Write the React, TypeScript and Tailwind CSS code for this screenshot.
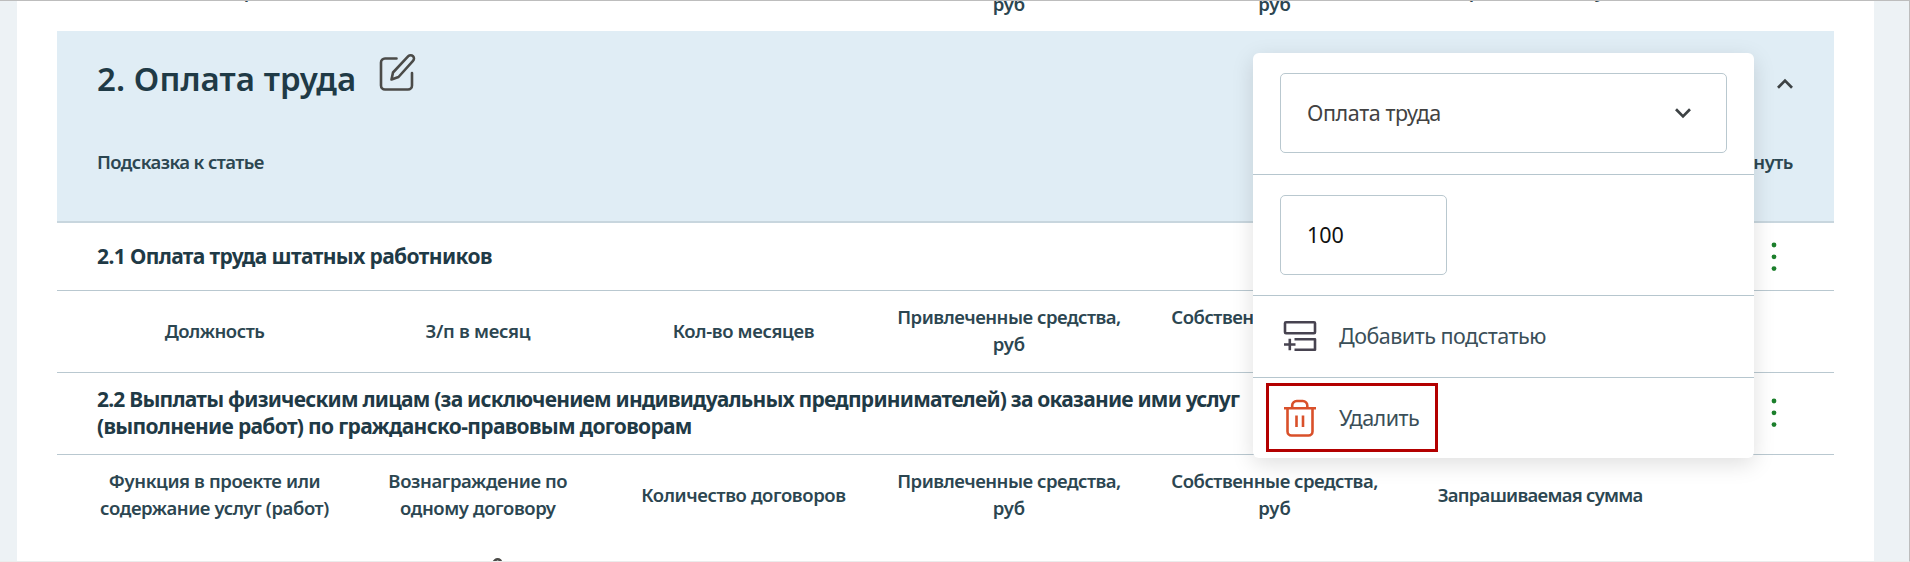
import type { ReactNode } from "react";

function EditIcon() {
  return (
    <svg width="38" height="38" viewBox="0 0 38 38" fill="none" stroke="#4b4b48" strokeWidth="2.6" strokeLinecap="round" strokeLinejoin="round">
      <path d="M17.500 5.500H6a4 4 0 0 0-4 4V32.500a4 4 0 0 0 4 4H29a4 4 0 0 0 4-4V20" />
      <path d="M29.300 3.200a3.300 3.300 0 0 1 4.700 4.700L19.500 24l-7 2.500 1.500-7z" />
    </svg>
  );
}

function DotsIcon() {
  return (
    <svg width="8" height="32" viewBox="0 0 8 32" fill="#1c7f2c">
      <circle cx="4" cy="4" r="2.400" />
      <circle cx="4" cy="15.800" r="2.400" />
      <circle cx="4" cy="27.600" r="2.400" />
    </svg>
  );
}

function Chevron({ up = false }: { up?: boolean }) {
  return (
    <svg width="18" height="12" viewBox="0 0 18 12" fill="none" stroke="#3d4244" strokeWidth="2.700">
      <path d={up ? "M2 9.800 9 2.600l7 7.200" : "M2 2.200 9 9.400l7-7.200"} />
    </svg>
  );
}

function AddRowIcon() {
  return (
    <svg width="34" height="32" viewBox="0 0 34 32" fill="none" stroke="#474350" strokeWidth="2.600" strokeLinejoin="round">
      <rect x="2" y="2.200" width="30" height="11" rx="1" />
      <path d="M11.500 19.200H32v10.600H11.500M1 24.500h11.500M6.800 18.800v11.500" />
    </svg>
  );
}

function TrashIcon() {
  return (
    <svg width="34" height="38" viewBox="0 0 34 38" fill="none" stroke="#d9502a" strokeWidth="2.600" strokeLinejoin="round">
      <path d="M1 9.300h32M9.200 9V6.500a4.500 4.500 0 0 1 4.500-4.500h6.100a4.500 4.500 0 0 1 4.500 4.500V9M4.500 9.500V32.500a4 4 0 0 0 4 4h17a4 4 0 0 0 4-4V9.500M13.500 16.500v11.500M20 16.500v11.500" />
    </svg>
  );
}

function HeaderRow({ cells }: { cells: ReactNode[] }) {
  return (
    <div className="grid h-[81px] shrink-0 grid-cols-[261px_repeat(5,265.6px)] items-center pb-[3px] pl-[27px] text-center text-[18.5px] leading-[27px] font-semibold text-[#2c4651]">
      {cells.map((cell, i) => (
        <div key={i} className="whitespace-nowrap">
          {cell}
        </div>
      ))}
    </div>
  );
}

const attracted = (
  <>
    <span className="tracking-[-0.5px]">Привлеченные средства,</span>
    <br />
    руб
  </>
);
const own = (
  <>
    <span className="tracking-[-0.5px]">Собственные средства,</span>
    <br />
    руб
  </>
);
const requested = <span className="tracking-[-0.74px]">Запрашиваемая сумма</span>;

function ItemMenu() {
  return (
    <div className="absolute top-[52px] left-[1253px] w-[501px] rounded-[6px] bg-white text-[21.5px] leading-[28px] text-[#3b4f59] shadow-[0_6px_22px_rgba(0,0,0,0.13)]">
      <div className="h-[122px] border-b border-[#b6c6ce] pt-[20px] pl-[27px]">
        <div className="flex h-[80px] w-[447px] items-center justify-between rounded-[5px] border border-[#b9c8cf] pr-[34px] pb-[1px] pl-[26px] text-[#424242]">
          <span className="tracking-[-0.4px]">Оплата труда</span>
          <Chevron />
        </div>
      </div>
      <div className="h-[121px] border-b border-[#b6c6ce] pt-[20px] pl-[27px]">
        <div className="flex h-[80px] w-[167px] items-center rounded-[5px] border border-[#b9c8cf] pb-[1px] pl-[26px] text-[#111111]">
          100
        </div>
      </div>
      <div className="flex h-[82px] items-center gap-[22px] border-b border-[#b6c6ce] pb-[1px] pl-[30px]">
        <AddRowIcon />
        <span className="tracking-[-0.5px]">Добавить подстатью</span>
      </div>
      <div className="h-[80px] pt-[5px] pl-[13px]">
        <div className="flex h-[69px] w-[172px] items-center gap-[22px] border-[3px] border-[#b30000] pl-[14px]">
          <TrashIcon />
          <span className="tracking-[-0.5px]">Удалить</span>
        </div>
      </div>
    </div>
  );
}

export default function App() {
  return (
    <div className="relative flex h-[562px] w-[1910px] flex-col overflow-hidden border-t border-r border-b border-t-[#bdbdbd] border-r-[#bdbdbd] border-b-[#ececec] bg-[#edf2f5] font-['Noto_Sans',sans-serif] text-[#1f3a46]">
      <div className="ml-[17px] flex h-[560px] w-[1857px] flex-col justify-start overflow-hidden bg-white pr-[40px] pl-[40px]">
        <div className="-mt-[50px] h-[80px] shrink-0">
          <HeaderRow
            cells={[<span className="tracking-[-0.3px]">Наименование расходов</span>, "", "", attracted, own, requested]}
          />
        </div>
        <div className="flex h-[192px] shrink-0 flex-col border-b-[2px] border-[#c8d6de] bg-[#e0edf5] pr-[40px] pl-[40px]">
          <div className="flex h-[99px] items-start justify-between">
            <div className="flex gap-[23px]">
              <h2 className="pt-[24px] text-[33px] leading-[48px] font-semibold tracking-[0.1px]">2. Оплата труда</h2>
              <div className="pt-[22px]">
                <EditIcon />
              </div>
            </div>
            <div className="pt-[47px]">
              <Chevron up />
            </div>
          </div>
          <div className="flex justify-between pt-[18px] text-[18.5px] leading-[28px] font-semibold text-[#2c4651]">
            <span className="tracking-[-0.6px]">Подсказка к статье</span>
            <span className="pr-[1px] tracking-[-0.5px]">
              Свер<span className="pl-[2px]">нуть</span>
            </span>
          </div>
        </div>
        <div className="flex h-[68px] shrink-0 items-center justify-between border-b border-[#b9c8d0] pr-[56px] pl-[40px]">
          <h3 className="text-[21px] leading-[27px] font-bold tracking-[-0.61px]">2.1 Оплата труда штатных работников</h3>
          <DotsIcon />
        </div>
        <div className="shrink-0 border-b border-[#b9c8d0]">
          <HeaderRow
            cells={[
              <span className="tracking-[-0.5px]">Должность</span>,
              <span className="tracking-[-0.3px]">З/п в месяц</span>,
              <span className="tracking-[-0.35px]">Кол-во месяцев</span>,
              attracted,
              own,
              "",
            ]}
          />
        </div>
        <div className="flex h-[82px] shrink-0 items-center justify-between border-b border-[#b9c8d0] pr-[56px] pb-[1px] pl-[40px]">
          <h3 className="text-[21px] leading-[27px] font-bold tracking-[-0.77px]">
            2.2 Выплаты физическим лицам (за исключением индивидуальных предпринимателей) за оказание ими услуг
            <br />
            <span className="tracking-[-0.68px]">(выполнение работ) по гражданско-правовым договорам</span>
          </h3>
          <DotsIcon />
        </div>
        <HeaderRow
          cells={[
            <span className="tracking-[-0.4px]">Функция в проекте или<br />содержание услуг (работ)</span>,
            <span className="tracking-[-0.4px]">Вознаграждение по<br />одному договору</span>,
            <span className="tracking-[-0.4px]">Количество договоров</span>,
            attracted,
            own,
            requested,
          ]}
        />
        <div className="shrink-0 pt-[21px] pl-[409px]">
          <EditIcon />
        </div>
      </div>
      <ItemMenu />
    </div>
  );
}
